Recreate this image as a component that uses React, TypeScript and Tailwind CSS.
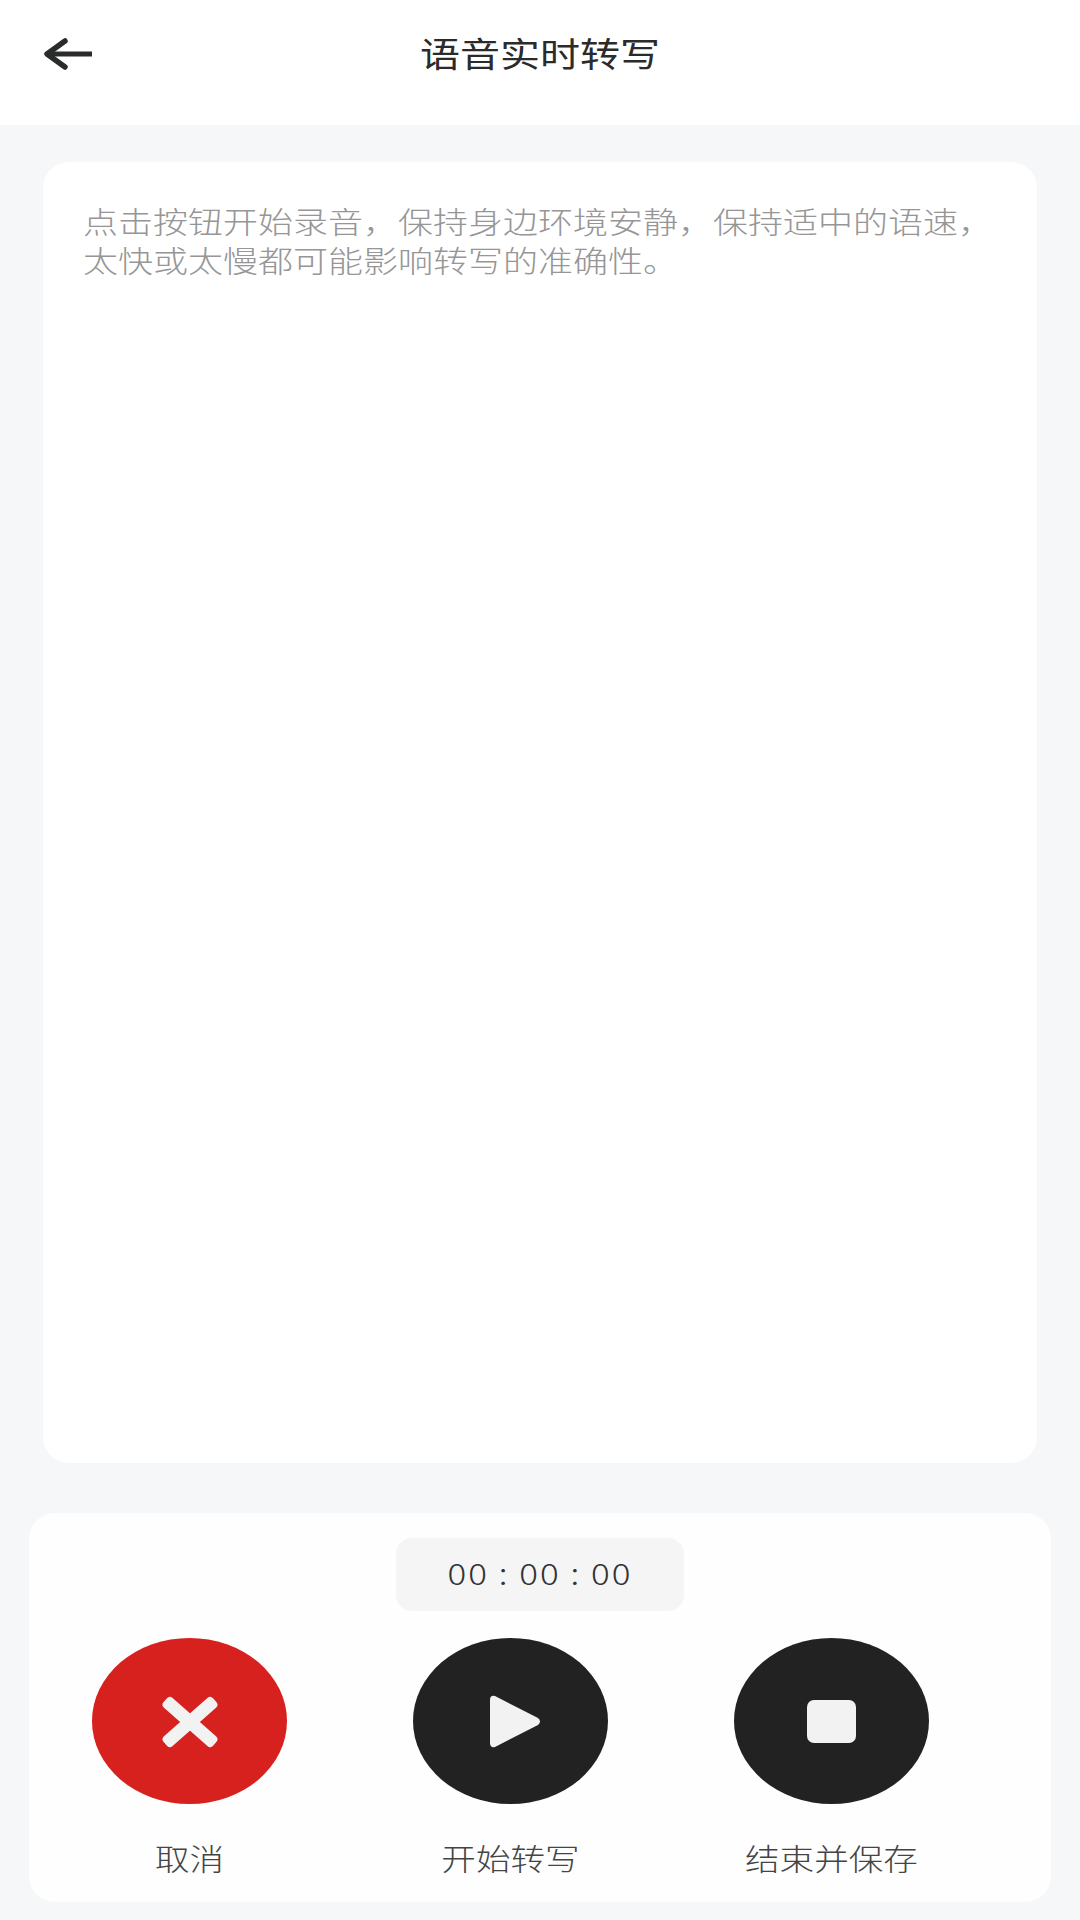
const font = { fontFamily: '"Noto Sans CJK SC", "Noto Sans", sans-serif' };

function Action({ label, red, children }: { label: string; red?: boolean; children: React.ReactNode }) {
  return (
    <div className="flex w-[321px] flex-col items-center">
      <div className={`flex h-[166px] w-[195px] items-center justify-center rounded-[50%] ${red ? "bg-[#d6211f]" : "bg-[#222222]"}`}>
        {children}
      </div>
      <div className="mt-[36px] h-[40px] origin-top scale-y-[.856] whitespace-nowrap text-[34.6px] leading-[40px] font-light text-[#444444]">
        {label}
      </div>
    </div>
  );
}

export default function App() {
  return (
    <div className="flex h-[1920px] w-[1080px] flex-col overflow-hidden bg-[#f6f7f9]" style={font}>
      <header className="grid h-[125px] shrink-0 grid-cols-[1fr_auto_1fr] items-start bg-white">
        <svg className="ml-[43px] mt-[38px]" width="50" height="32" viewBox="0 0 50 32" fill="none">
          <path d="M22 3 L4 16 L22 29" stroke="#2a2c2c" strokeWidth="5.5" strokeLinecap="round" strokeLinejoin="round" />
          <path d="M5 16 H49" stroke="#2a2c2c" strokeWidth="5" />
        </svg>
        <h1 className="mt-[31px] origin-top scale-y-[.856] text-[40px] leading-[50px] font-normal text-[#2b2b2b]">语音实时转写</h1>
        <div />
      </header>

      <main className="mx-[43px] mt-[37px] h-[1301px] rounded-[26px] bg-white pl-[40px] pr-[41px] pt-[38px]">
        <p className="origin-top scale-y-[.856] text-[35px] leading-[46px] font-light text-[#969696]">
          点击按钮开始录音，保持身边环境安静，保持适中的语速，太快或太慢都可能影响转写的准确性。
        </p>
      </main>

      <section className="mx-[29px] mt-[50px] h-[389px] rounded-[26px] bg-[#fefefe] pt-[25px]">
        <div className="mx-auto flex h-[73px] w-[288px] items-center justify-center rounded-[16px] bg-[#f5f5f5]">
          <span className="-translate-y-[3px] scale-y-[.856] whitespace-nowrap text-[35px] leading-[40px] font-light tracking-[2px] text-[#333333]">00 : 00 : 00</span>
        </div>
        <div className="mt-[27px] flex">
          <Action label="取消" red>
            <svg className="mt-[1px]" width="58" height="52" viewBox="0 0 58 52">
              <rect x="-4" y="19.5" width="66" height="13" rx="4" fill="#f2f2f2" transform="rotate(41.5 29 26)" />
              <rect x="-4" y="19.5" width="66" height="13" rx="4" fill="#f2f2f2" transform="rotate(-41.5 29 26)" />
            </svg>
          </Action>
          <Action label="开始转写">
            <svg className="ml-[9px] mt-[1px]" width="52" height="53" viewBox="0 0 52 53">
              <path d="M1 5 Q1 0 6 1 L49 23 Q53 26.5 49 30 L6 52 Q1 53 1 48 Z" fill="#f2f2f2" />
            </svg>
          </Action>
          <Action label="结束并保存">
            <div className="mt-[1px] h-[43px] w-[49px] rounded-[7px] bg-[#f2f2f2]" />
          </Action>
        </div>
      </section>
    </div>
  );
}
